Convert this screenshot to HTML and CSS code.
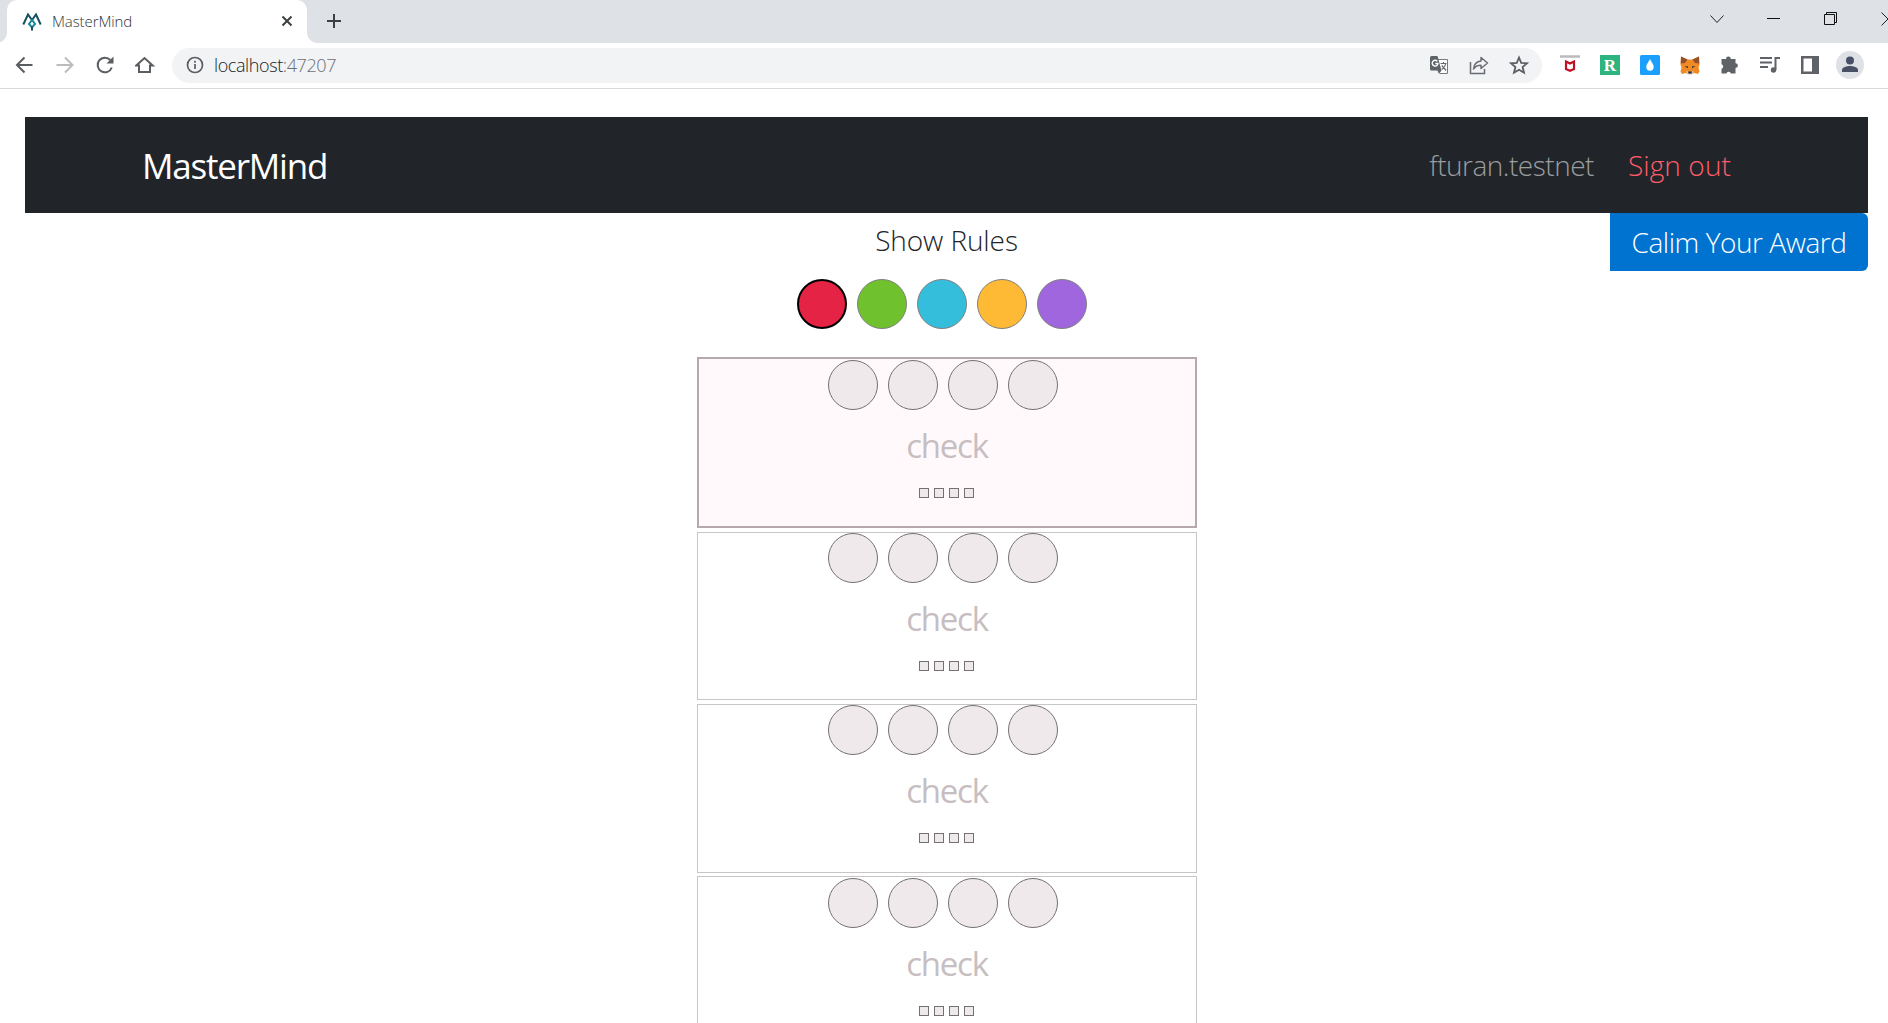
FILE: index.html
```html
<!DOCTYPE html>
<html lang="en">
<head>
<meta charset="utf-8">
<title>MasterMind</title>
<link rel="stylesheet" href="styles.css">
</head>
<body>
<header class="browser">
  <div class="tabstrip">
    <div class="tab">
      <svg class="favicon" width="20" height="20" viewBox="0 0 20 20" fill="none" stroke-width="2"><path d="M1.300 13.500 6 3.500l4 5.500 4-5.500 4.700 10" stroke="#17505f"/><path d="m10 9-3 4 3 3.500 3-3.500Z" stroke="#16899b"/><path d="M10 15.500v4" stroke="#17505f"/></svg>
      <span class="tab-title">MasterMind</span>
      <svg class="tab-close" width="12" height="12" viewBox="0 0 12 12" stroke="#3c4043" stroke-width="2"><path d="m1.500 1.500 9 9m0-9-9 9"/></svg>
    </div>
    <svg class="new-tab" width="16" height="16" viewBox="0 0 16 16" stroke="#3c4043" stroke-width="2"><path d="M8 1v14M1 8h14"/></svg>
    <div class="window-controls">
      <svg width="14" height="14" viewBox="0 0 14 14" fill="none" stroke="#222"><path d="m.5 3.500 6.500 7 6.500-7"/></svg>
      <svg width="14" height="14" viewBox="0 0 14 14" fill="none" stroke="#111"><path d="M0 6.500h13"/></svg>
      <svg width="14" height="14" viewBox="0 0 14 14" fill="none" stroke="#111"><path d="M.5 2.500h10v10H.5zM2.500 2V.5h10v10H11"/></svg>
      <svg width="14" height="14" viewBox="0 0 14 14" fill="none" stroke="#222"><path d="m.5.500 13 13m0-13-13 13"/></svg>
    </div>
  </div>
  <div class="toolbar">
    <div class="nav-icons">
      <svg width="20" height="20" viewBox="0 0 20 20" fill="none" stroke="#5a5d61" stroke-width="2"><path d="M17.500 10H3M9.500 2.500 2 10l7.500 7.500"/></svg>
      <svg width="20" height="20" viewBox="0 0 20 20" fill="none" stroke="#babcbe" stroke-width="2"><path d="M1.500 10H17M10 2.500l7.500 7.500-7.500 7.500"/></svg>
      <svg width="20" height="20" viewBox="0 0 20 20" fill="none" stroke="#5a5d61" stroke-width="2"><path d="M16.800 12.500A7.300 7.300 0 1 1 15.300 5"/><path d="M18.500 1.500v7h-7z" fill="#5a5d61" stroke="none"/></svg>
      <svg width="20" height="20" viewBox="0 0 20 20" fill="none" stroke="#5a5d61" stroke-width="2"><path d="M1.300 10.500H4V17h11v-6.500h2.700L9.500 3z"/></svg>
    </div>
    <div class="omnibox">
      <svg width="18" height="18" viewBox="0 0 18 18" fill="none" stroke="#5a5d61" stroke-width="1.700"><circle cx="9" cy="9" r="7.500"/><path d="M9 8v5M9 4.800v1.900"/></svg>
      <span class="url">localhost<span class="port">:47207</span></span>
      <div class="omni-icons">
        <svg width="20" height="20" viewBox="0 0 20 20"><path fill="#fff" stroke="#77797d" d="M8 4.500h10.500v14H11"/><path fill="#5f6368" d="M2.500 1h6l4 14.500h-10A1.500 1.500 0 0 1 1 14V2.500A1.500 1.500 0 0 1 2.500 1zM8.500 15.500h4L10 19z"/><path fill="none" stroke="#fff" stroke-width="1.400" d="M8.300 6.300A2.900 2.900 0 1 0 9 8.500H6.300"/><path fill="none" stroke="#66696d" stroke-width="1.200" d="M11.500 8.500h6M14.500 7v1.500M16.800 8.500c-.5 3-2 4.500-4 6M12.700 10.500l4.500 5"/></svg>
        <svg width="20" height="20" viewBox="0 0 20 20" fill="none" stroke="#6a6d71" stroke-width="1.500"><path d="M1.500 7v11.500h14V14"/><path stroke-linejoin="round" d="M12 2.500 18.500 8 12 13.500v-3.200c-3.500 0-5.800 1.200-7.500 3.700.5-4.500 3-7.500 7.500-8z"/></svg>
        <svg width="20" height="20" viewBox="0 0 20 20" fill="none" stroke="#5a5d61" stroke-width="1.800"><path d="m10 2.500 2.200 5.300 5.800.5-4.400 3.700 1.400 5.700-5-3-5 3 1.400-5.700L2 8.300l5.800-.5z"/></svg>
      </div>
    </div>
    <div class="extensions">
      <svg width="20" height="20" viewBox="0 0 20 20"><path d="M0 1.500h20" stroke="#b9bbbd" stroke-width="2.500"/><path fill="none" stroke="#c01127" stroke-width="2.200" d="M6 6.500v7.500l4 1.700 4-1.700V6.500L10 8.500z"/></svg>
      <svg width="20" height="20" viewBox="0 0 20 20"><path fill="#2eb47f" d="M0 0h20v20H0z"/><text class="r-glyph" x="10" y="16" text-anchor="middle">R</text></svg>
      <svg width="20" height="20" viewBox="0 0 20 20"><rect width="20" height="20" rx="1.500" fill="#1a9fff"/><path fill="#fff" d="M10 4c2 4 3.700 5.500 3.700 8a3.700 3.700 0 0 1-7.400 0c0-2.500 1.700-4 3.700-8z"/></svg>
      <svg width="20" height="20" viewBox="0 0 20 20"><path fill="#f08a24" d="m1 1.500 6.500 3h5l6.500-3 .5 8-1 3 1 4-1.500 2.500-4-1-2 1H8l-2-1-4 1L.5 16.500l1-4-1-3z"/><path fill="#94502c" d="m1 1.500 6.500 3L5 8 .8 8.500zM19 1.500l-6.500 3L15 8l4.200.5z"/><path fill="#d8c2ae" d="m6.500 15.500 2 1.500h3l2-1.500v3l-2 1h-3l-2-1z"/><path fill="#222c36" d="m4.500 11 3.500.5v1.700zM15.500 11l-3.500.5v1.700zM8.300 16.500h3.400v2H8.300z"/></svg>
      <svg width="20" height="20" viewBox="0 0 20 20" fill="#5f6368"><path d="M6 4a2.400 2.400 0 0 1 4.800 0H15.500V8.200a2.400 2.400 0 0 1 0 4.800v5.500h-4.600a2.300 2.300 0 0 0-4.500 0H1.500v-4.700a2.400 2.400 0 0 0 0-4.600V4z"/></svg>
      <svg width="20" height="20" viewBox="0 0 20 20" fill="none" stroke="#5f6368" stroke-width="2"><path d="M0 3h12M0 7.500h12M0 12h8M15.500 15V3H20"/><circle cx="13.500" cy="15" r="2.700" fill="#5f6368" stroke="none"/></svg>
      <svg width="20" height="20" viewBox="0 0 20 20"><path fill="#5f6368" d="M1 1h18v18H1z"/><path fill="#fff" d="M3.500 3.500h8.500v13H3.500z"/></svg>
      <svg class="avatar" width="28" height="28" viewBox="0 0 28 28"><circle cx="14" cy="14" r="14" fill="#dee1e6"/><circle cx="14" cy="9.500" r="4" fill="#475064"/><path fill="#475064" d="M6 21v-2c0-3 5-4 8-4s8 1 8 4v2z"/></svg>
      <svg width="20" height="20" viewBox="0 0 20 20" fill="#5f6368"><circle cx="10" cy="3.500" r="2"/><circle cx="10" cy="10" r="2"/><circle cx="10" cy="16.500" r="2"/></svg>
    </div>
  </div>
</header>
<main class="page">
  <nav class="navbar">
    <span class="brand">MasterMind</span>
    <span class="account">fturan.testnet</span>
    <span class="signout">Sign out</span>
  </nav>
  <div class="actions">
    <div class="rules">Show Rules</div>
    <button class="award">Calim Your Award</button>
  </div>
  <div class="palette">
    <i class="peg red"></i><i class="peg green"></i><i class="peg blue"></i><i class="peg yellow"></i><i class="peg purple"></i>
  </div>
  <div class="board">
    <section class="row current">
      <div class="pegs"><i class="peg"></i><i class="peg"></i><i class="peg"></i><i class="peg"></i></div>
      <div class="check">check</div>
      <div class="hints"><i></i><i></i><i></i><i></i></div>
    </section>
    <section class="row second">
      <div class="pegs"><i class="peg"></i><i class="peg"></i><i class="peg"></i><i class="peg"></i></div>
      <div class="check">check</div>
      <div class="hints"><i></i><i></i><i></i><i></i></div>
    </section>
    <section class="row third">
      <div class="pegs"><i class="peg"></i><i class="peg"></i><i class="peg"></i><i class="peg"></i></div>
      <div class="check">check</div>
      <div class="hints"><i></i><i></i><i></i><i></i></div>
    </section>
    <section class="row fourth">
      <div class="pegs"><i class="peg"></i><i class="peg"></i><i class="peg"></i><i class="peg"></i></div>
      <div class="check">check</div>
      <div class="hints"><i></i><i></i><i></i><i></i></div>
    </section>
  </div>
</main>
</body>
</html>
```
FILE: styles.css
```css
* { box-sizing: border-box; }
body { margin: 0; height: 1023px; overflow: hidden; background: #fff; font-family: "Open Sans", "Noto Sans", sans-serif; font-weight: 340; }
svg { display: block; flex: none; }

/* Browser chrome */
.browser { height: 89px; border-bottom: 1px solid #d7d9dc; overflow: hidden; }
.tabstrip { display: flex; align-items: flex-start; height: 43px; background: #dee1e6; padding-left: 7px; overflow: hidden; }
.tab { position: relative; display: flex; align-items: center; width: 300px; height: 43px; padding: 0 14px 1px 15px; border-radius: 10px 10px 0 0; background: #fff; }
.tab::before, .tab::after { content: ""; position: absolute; bottom: 0; width: 10px; height: 10px; }
.tab::before { left: -10px; background: radial-gradient(circle at 0 0, #dee1e6 9.5px, #fff 10px); }
.tab::after { right: -10px; background: radial-gradient(circle at 100% 0, #dee1e6 9.5px, #fff 10px); }
.tab-title { margin-left: 10px; font-size: 15px; letter-spacing: -.1px; color: #303338; }
.tab-close { margin-left: auto; }
.new-tab { margin: 13px 0 0 19px; }
.window-controls { display: flex; gap: 43px; margin: 12px -7px 0 auto; }
.toolbar { display: flex; align-items: center; height: 44px; padding-left: 15px; }
.nav-icons { display: flex; flex: none; gap: 20px; width: 157px; }
.omnibox { display: flex; flex: none; align-items: center; width: 1370px; height: 35px; padding: 0 13px 0 14px; border-radius: 18px; background: #f1f3f4; }
.url { margin-left: 10px; font-size: 18px; letter-spacing: -.4px; color: #202124; white-space: nowrap; }
.port { color: #6b6f74; }
.omni-icons { display: flex; gap: 20px; margin-left: auto; }
.extensions { display: flex; flex: none; align-items: center; gap: 20px; margin-left: 18px; }
.avatar { margin: 0 -4px; }
.r-glyph { font: bold 17px "Liberation Serif", serif; fill: #fff; }

/* Page */
.page { padding: 28px 20px 0 25px; }
.navbar { display: flex; align-items: center; height: 96px; padding: 0 137px 0 117px; background: #212529; color: #fff; }
.brand { font-size: 35px; font-weight: 400; letter-spacing: -1.2px; margin-right: auto; }
.account { font-size: 28px; letter-spacing: -.5px; color: #9b9d9f; }
.signout { font-size: 28px; letter-spacing: .1px; color: #ff5c69; margin-left: 34px; }
.actions { display: grid; grid-template-columns: 1fr 258px; height: 66px; }
.rules { padding: 7px 0 0 258px; font-size: 28px; line-height: 40px; letter-spacing: -.1px; text-align: center; color: #212529; }
.award { height: 58px; padding: 0; border: 0; border-radius: 0 6px 6px 0; background: #0072d0; color: #fff; font: inherit; font-size: 28px; letter-spacing: -.45px; }
.palette { display: flex; gap: 10px; margin-left: 772px; }
.peg { width: 50px; height: 50px; border: 1px solid #747074; border-radius: 50%; background: #efe9eb; }
.red { background: #e52344; border: 2px solid #000; }
.green { background: #70c12e; border-color: #808080; }
.blue { background: #35bedc; border-color: #808080; }
.yellow { background: #ffba35; border-color: #808080; }
.purple { background: #9f66de; border-color: #808080; }
.board { width: 500px; margin: 28px 0 0 672px; }
.row { height: 168px; margin-bottom: 4px; border: 1px solid #c8c5c7; }
.row.current { height: 171px; padding-top: 1px; border: 2px solid #b6a8ac; background: #fff9fb; }
.row.third { height: 169px; margin-bottom: 3px; }
.row.fourth { height: 169px; padding-top: 1px; }
.pegs { display: flex; justify-content: center; gap: 10px; padding-right: 8px; }
.check { margin-top: 10px; height: 52px; line-height: 52px; text-align: center; font-size: 33px; font-weight: 400; letter-spacing: -1.2px; color: #c7bec1; }
.hints { display: flex; justify-content: center; gap: 5px; margin-top: 16px; padding-right: 1px; }
.hints i { width: 10px; height: 10px; border: 1px solid #747074; background: #eee9eb; }
```
